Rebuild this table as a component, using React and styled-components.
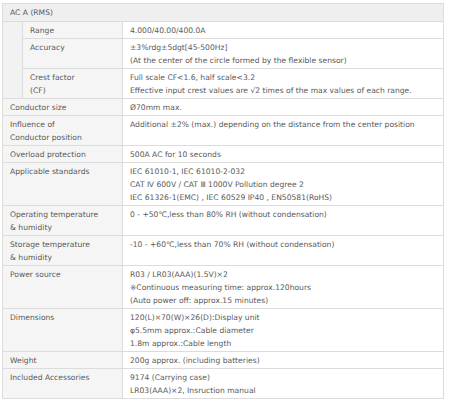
import React from "react";
import styled, { createGlobalStyle } from "styled-components";

const Global = createGlobalStyle`
  html, body { margin: 0; padding: 0; background: #fff; }
  body { font-family: "DejaVu Sans", Verdana, sans-serif; }
`;

const Wrap = styled.div`
  padding: 3px 0 0 2px;
`;

const Table = styled.table`
  width: 442px;
  border-collapse: collapse;
  table-layout: fixed;
  font-size: 7.6px;
  line-height: 13px;
  color: #595959;
  border: 1px solid #d8d8d8;
`;

const Cell = styled.td`
  border: 1px solid #dcdcdc;
  padding: 2px 6px 1px 7px;
  vertical-align: top;
  background: ${(p) => (p.$head ? "#efefef" : p.$label ? "#f5f5f5" : "#fff")};
  white-space: nowrap;
  height: ${(p) => (p.$head ? "14px" : "auto")};
`;

const Indent = styled.td`
  border: 1px solid #dcdcdc;
  border-top: none;
  border-bottom: none;
  background: #f2f2f2;
  padding: 0;
`;

const Line = styled.div``;

const sub = [
  ["Range", ["4.000/40.00/400.0A"]],
  ["Accuracy", ["±3%rdg±5dgt[45-500Hz]", "(At the center of the circle formed by the flexible sensor)"]],
  [["Crest factor", "(CF)"], ["Full scale CF<1.6, half scale<3.2", "Effective input crest values are √2 times of the max values of each range."]],
];

const rows = [
  ["Conductor size", ["Ø70mm max."]],
  [["Influence of", "Conductor position"], ["Additional ±2% (max.) depending on the distance from the center position"]],
  ["Overload protection", ["500A AC for 10 seconds"]],
  ["Applicable standards", ["IEC 61010-1, IEC 61010-2-032", "CAT Ⅳ 600V / CAT Ⅲ 1000V Pollution degree 2", "IEC 61326-1(EMC) , IEC 60529 IP40 , EN50581(RoHS)"]],
  [["Operating temperature", "& humidity"], ["0 - +50℃,less than 80% RH (without condensation)"]],
  [["Storage temperature", "& humidity"], ["-10 - +60℃,less than 70% RH (without condensation)"]],
  ["Power source", ["R03 / LR03(AAA)(1.5V)×2", "※Continuous measuring time: approx.120hours", "(Auto power off: approx.15 minutes)"]],
  ["Dimensions", ["120(L)×70(W)×26(D):Display unit", "φ5.5mm approx.:Cable diameter", "1.8m approx.:Cable length"]],
  ["Weight", ["200g approx. (including batteries)"]],
  ["Included Accessories", ["9174 (Carrying case)", "LR03(AAA)×2, Insruction manual"]],
];

const Lines = ({ v }) => (Array.isArray(v) ? v : [v]).map((t, i) => <Line key={i}>{t}</Line>);

export default function App() {
  return (
    <>
      <Global />
      <Wrap>
        <Table>
          <colgroup>
            <col style={{ width: 20 }} />
            <col style={{ width: 100 }} />
            <col />
          </colgroup>
          <tbody>
            <tr>
              <Cell $head colSpan={3}>AC A (RMS)</Cell>
            </tr>
            {sub.map(([l, v], i) => (
              <tr key={"s" + i}>
                <Indent />
                <Cell $label><Lines v={l} /></Cell>
                <Cell><Lines v={v} /></Cell>
              </tr>
            ))}
            {rows.map(([l, v], i) => (
              <tr key={i}>
                <Cell $label colSpan={2}><Lines v={l} /></Cell>
                <Cell><Lines v={v} /></Cell>
              </tr>
            ))}
          </tbody>
        </Table>
      </Wrap>
    </>
  );
}
